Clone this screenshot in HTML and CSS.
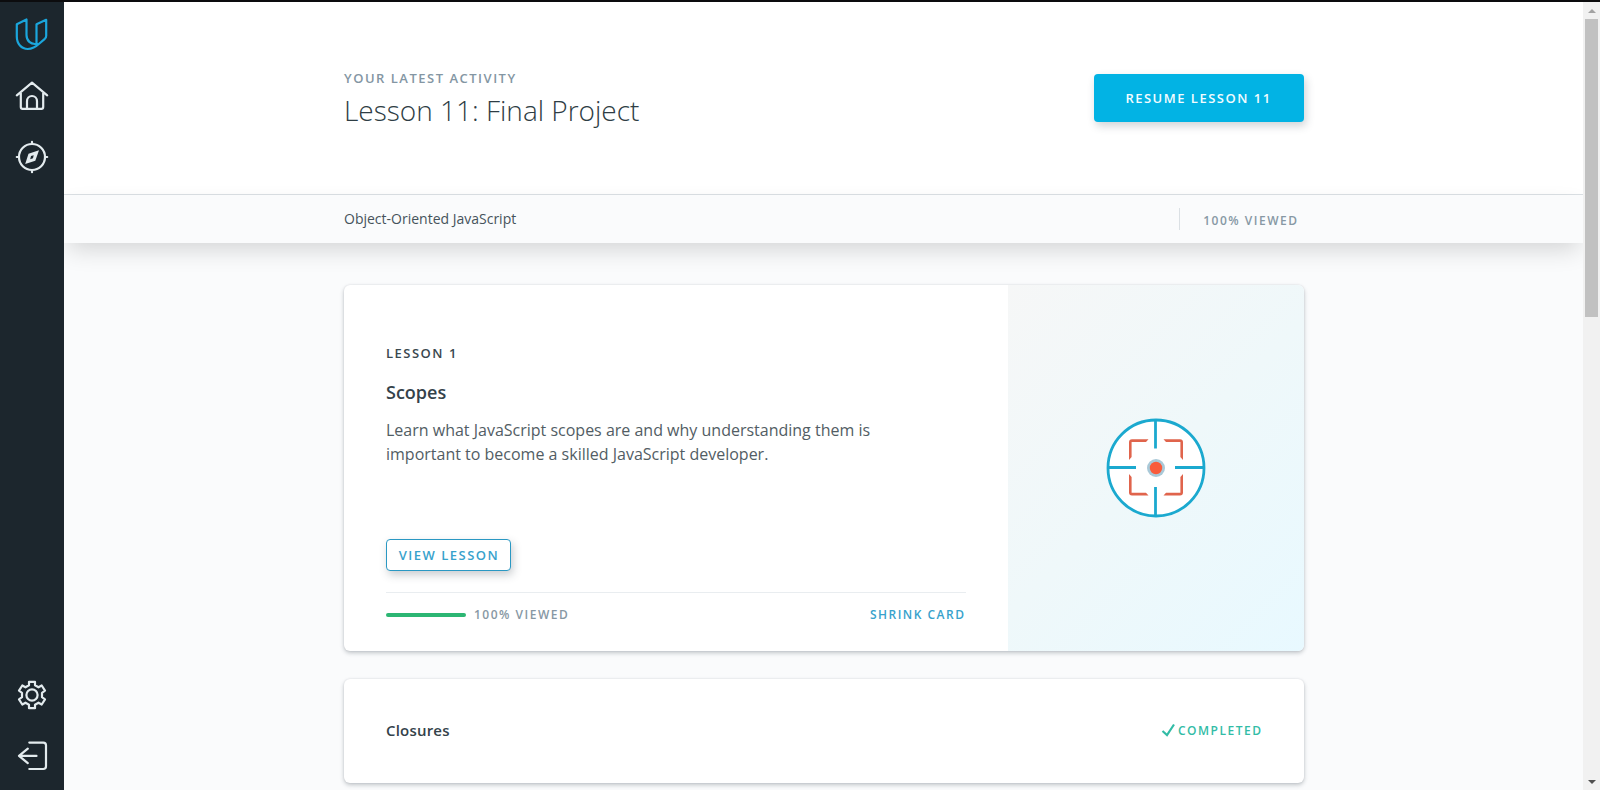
FILE: index.html
```html
<!DOCTYPE html>
<html lang="en">
<head>
<meta charset="utf-8">
<title>Object-Oriented JavaScript</title>
<link rel="stylesheet" href="styles.css">
</head>
<body>
<div class="app">
  <nav class="sidebar">
    <div class="nav-group">
      <a class="nav-item logo"><svg viewBox="0 0 34 34" width="34" height="34"><path d="M11.5 2.5 L1.8 7.3 V19.5 C1.8 27 6.5 32 12.8 32 C18 32 21.3 29.4 25 26 L29.8 21.8 Q31.2 20.5 31.2 18.7 V2.8 L21.5 7.3 V26.5 M22 26.8 C15.5 28 11.5 23.5 11.5 18 V2.5"/></svg></a>
      <a class="nav-item"><svg viewBox="0 0 34 34" width="34" height="34"><path d="M1.8 16.3 L17 3.7 L32.2 16.3 M5.8 14 V28 Q5.8 29.8 7.6 29.8 H26.4 Q28.2 29.8 28.2 28 V14 M12 29.5 V22.3 a5 5.3 0 0 1 10 0 V29.5"/></svg></a>
      <a class="nav-item"><svg viewBox="0 0 34 34" width="34" height="34"><circle cx="17" cy="17" r="13"/><path d="M17 1.8 V4 M17 30 V32.2 M1.8 17 H4 M30 17 H32.2"/><path class="solid" fill-rule="evenodd" d="M24 10.3 L20.3 20.8 L10.2 24 L13.5 13.8 Z M18.7 15.2 L16 16 L15.2 19.2 L18 18.2 Z"/></svg></a>
    </div>
    <div class="nav-group">
      <a class="nav-item"><svg viewBox="0 0 34 34" width="34" height="34"><path d="M14 3.8 H20 V7.3 L23.5 9.3 L26.7 7.5 L30 12.7 L27 14.8 V19.2 L30 21.3 L26.7 26.5 L23.5 24.7 L20 26.7 V30.2 H14 V26.7 L10.5 24.7 L7.3 26.5 L4 21.3 L7 19.2 V14.8 L4 12.7 L7.3 7.5 L10.5 9.3 L14 7.3 Z"/><circle cx="17" cy="17" r="5.6"/></svg></a>
      <a class="nav-item"><svg viewBox="0 0 34 34" width="34" height="34"><path d="M14.3 3.6 H28.3 Q31 3.6 31 6.3 V27.3 Q31 30 28.3 30 H14.3 M21.5 16.9 H4 M12.8 9.7 L4 16.9 L12.8 24.1"/></svg></a>
    </div>
  </nav>
  <main class="main">
    <header class="hero">
      <div class="wrap hero-inner">
        <div>
          <p class="eyebrow">YOUR LATEST ACTIVITY</p>
          <h1 class="hero-title">Lesson 11: Final Project</h1>
        </div>
        <button class="btn-primary">RESUME LESSON 11</button>
      </div>
    </header>
    <div class="subbar">
      <div class="wrap subbar-inner">
        <span class="course">Object-Oriented JavaScript</span>
        <span class="viewed bar-viewed">100% VIEWED</span>
      </div>
    </div>
    <div class="wrap cards">
      <section class="card card-open">
        <div class="card-body">
          <p class="lesson-no">LESSON 1</p>
          <h2 class="lesson-title">Scopes</h2>
          <p class="desc">Learn what JavaScript scopes are and why understanding them is important to become a skilled JavaScript developer.</p>
          <button class="btn-outline">VIEW LESSON</button>
          <div class="card-foot">
            <div class="progress"></div>
            <span class="viewed">100% VIEWED</span>
            <a class="shrink">SHRINK CARD</a>
          </div>
        </div>
        <div class="card-art">
          <svg class="scope" viewBox="0 0 100 100" width="100" height="100">
            <circle class="ring" cx="50" cy="50" r="48"/>
            <path class="ring" d="M49.5 2 V30.5 M49.5 69 V98 M2 49.5 H30 M69 49.5 H98"/>
            <path class="bracket" d="M42.5 21.3 H26 Q23 21.3 23 24.3 V42 L25.6 39 V24 H40 Z M57.5 21.3 H74 Q77 21.3 77 24.3 V42 L74.4 39 V24 H60 Z M42.5 77.5 H26 Q23 77.5 23 74.5 V56 L25.6 59 V74.8 H40 Z M57.5 77.5 H74 Q77 77.5 77 74.5 V56 L74.4 59 V74.8 H60 Z"/>
            <circle class="halo" cx="50" cy="50" r="9"/>
            <circle class="dot" cx="50" cy="50" r="6.2"/>
          </svg>
        </div>
      </section>
      <section class="card card-closed">
        <h2 class="closed-title">Closures</h2>
        <span class="completed"><svg viewBox="0 0 15 14" width="15" height="14"><path d="M1.5 8 L6 12 L13 1.5"/></svg>COMPLETED</span>
      </section>
    </div>
  </main>
  <div class="scrollbar"><i class="arrow up"></i><div class="thumb"></div><i class="arrow down"></i></div>
</div>
</body>
</html>
```
FILE: styles.css
```css
* { box-sizing: border-box; }
body { margin: 0; height: 790px; overflow: hidden; background: #0c0c0e; font-family: "Open Sans", sans-serif; color: #2e3d44; }
p, h1, h2 { margin: 0; }
button { font-family: inherit; padding: 0; }
.app { display: flex; height: 790px; padding-top: 2px; }

.sidebar { width: 64px; flex: none; background: #1c262d; display: flex; flex-direction: column; justify-content: space-between; padding: 15px 0 17px .4px; }
.nav-group { display: flex; flex-direction: column; align-items: center; gap: 27px; }
.nav-item { display: block; height: 34px; }
.nav-item svg { display: block; fill: none; stroke: #e3ebee; stroke-width: 2.2; stroke-linejoin: round; stroke-linecap: round; }
.nav-item .solid { fill: #e3ebee; stroke: none; }
.nav-item.logo { margin-bottom: 1px; }
.logo svg { stroke: #1ba6dc; }

.main { flex: 1; min-width: 0; background: #fafbfc; overflow: hidden; }
.wrap { width: 960px; margin: 0 auto; }
.hero { height: 193px; background: #fff; border-bottom: 1px solid #dbe0e4; }
.hero-inner { display: flex; justify-content: space-between; align-items: flex-start; padding-top: 66px; }
.eyebrow { font-size: 13px; line-height: 20px; font-weight: 600; letter-spacing: 1.5px; color: #8496a3; padding-left: .5px; }
.hero-title { font-size: 28px; line-height: 36px; font-weight: 300; margin-top: 4px; padding-left: .5px; }
.btn-primary { width: 210px; height: 48px; margin-top: 6px; border: 0; border-radius: 4px; background: #02b3e4; color: #f2fcff; font-size: 13px; font-weight: 600; letter-spacing: 1.5px; box-shadow: 2px 4px 8px rgba(46,61,73,.22); }
.subbar { height: 48px; background: #fafbfc; box-shadow: 0 10px 24px -4px rgba(0,0,0,.16); }
.subbar-inner { display: flex; justify-content: space-between; padding-top: 13px; }
.course { font-size: 14px; line-height: 22px; color: #46535b; padding-left: .5px; }
.viewed { font-size: 12px; line-height: 18px; font-weight: 600; letter-spacing: 1.5px; color: #8798a4; }
.bar-viewed { height: 22px; line-height: 25px; border-left: 1px solid #dbe0e4; padding: 0 5px 0 23px; }

.cards { padding-top: 42px; display: flex; flex-direction: column; gap: 28px; }
.card { background: #fff; border-radius: 6px; box-shadow: 0 2px 4px rgba(46,61,73,.28), 0 0 2px rgba(46,61,73,.12); display: flex; }
.card-open { height: 366px; overflow: hidden; }
.card-body { width: 664px; padding: 58px 42px 0 42.5px; }
.lesson-no { font-size: 13px; line-height: 20px; font-weight: 600; letter-spacing: 1.5px; color: #3a484f; }
.lesson-title { font-size: 18px; line-height: 26px; font-weight: 600; color: #34424a; margin-top: 16px; }
.desc { font-size: 16px; line-height: 24px; font-weight: 400; color: #525d64; margin-top: 13px; width: 500px; }
.btn-outline { display: block; width: 125px; height: 32px; margin-top: 73px; border: 1px solid #2a98c3; border-radius: 4px; background: #fff; color: #38a2cc; font-size: 13px; font-weight: 600; letter-spacing: 1.5px; padding-left: 1px; box-shadow: 2px 4px 8px rgba(46,61,73,.25); }
.card-foot { margin-top: 21px; border-top: 1px solid #e9edf0; display: flex; align-items: center; padding-top: 13px; }
.progress { width: 80px; height: 4px; border-radius: 2px; background: #2cb673; margin-right: 8px; }
.shrink { margin-left: auto; font-size: 12px; line-height: 18px; font-weight: 600; letter-spacing: 1.5px; color: #38a2cc; }
.card-art { flex: 1; display: flex; align-items: center; justify-content: center; background: linear-gradient(135deg, #f6f7f7, #eff8fa 50%, #e8f9ff); }
.scope { fill: none; }
.ring { stroke: #1ba9cf; stroke-width: 2.8; }
circle.ring { fill: #fff; }
.bracket { fill: #e0644c; }
.halo { fill: #a9c9d8; }
.dot { fill: #f95c3c; }
.card-closed { height: 104px; align-items: center; justify-content: space-between; padding: 0 41px 2px 42.5px; }
.closed-title { font-size: 15px; font-weight: 600; letter-spacing: .2px; color: #34424a; }
.completed { display: flex; align-items: center; gap: 2px; font-size: 12px; font-weight: 600; letter-spacing: 1.5px; color: #32bca6; }
.completed svg { fill: none; stroke: currentColor; stroke-width: 2.2; }

.scrollbar { width: 17px; flex: none; background: #f1f1f1; display: flex; flex-direction: column; align-items: center; padding: 7px 0 6px; }
.arrow { width: 0; height: 0; border: 4px solid transparent; }
.up { border-top: 0; border-bottom-color: #a3a3a3; }
.down { border-bottom: 0; border-top-color: #505050; margin-top: auto; }
.thumb { width: 13px; height: 298px; margin-top: 6px; background: #c1c1c1; }
```
